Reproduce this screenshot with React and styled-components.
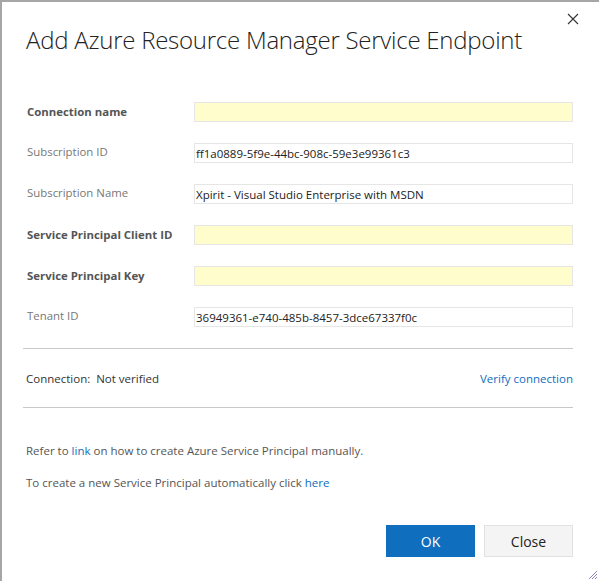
import styled, { createGlobalStyle } from "styled-components";

const GlobalStyle = createGlobalStyle`
  html, body {
    margin: 0;
    padding: 0;
    background: #ffffff;
  }
  body {
    font-family: "Open Sans", "Noto Sans", sans-serif;
  }
`;

const fields = [
  { label: "Connection name", required: true, value: "" },
  { label: "Subscription ID", value: "ff1a0889-5f9e-44bc-908c-59e3e99361c3" },
  { label: "Subscription Name", value: "Xpirit - Visual Studio Enterprise with MSDN" },
  { label: "Service Principal Client ID", required: true, value: "" },
  { label: "Service Principal Key", required: true, value: "" },
  { label: "Tenant ID", value: "36949361-e740-485b-8457-3dce67337f0c" },
];

const App = () => {
  return (
    <>
      <GlobalStyle />
      <Dialog>
        <CloseButton aria-label="Close">
          <svg width="12" height="12" viewBox="0 0 12 12">
            <path d="M1 1 L11 11 M11 1 L1 11" stroke="#333" strokeWidth="1.1" />
          </svg>
        </CloseButton>

        <Title>Add Azure Resource Manager Service Endpoint</Title>

        <Form>
          {fields.map(({ label, required, value }) => (
            <Row key={label}>
              <Label $required={required}>{label}</Label>
              <Input $required={required} defaultValue={value} readOnly />
            </Row>
          ))}
        </Form>

        <Divider />

        <StatusRow>
          <span>Connection:&nbsp; Not verified</span>
          <Link>Verify connection</Link>
        </StatusRow>

        <Divider />

        <Help>
          <p>
            Refer to <Link>link</Link> on how to create Azure Service Principal manually.
          </p>
          <p>
            To create a new Service Principal automatically click <Link>here</Link>
          </p>
        </Help>

        <Footer>
          <Button $primary>OK</Button>
          <Button>Close</Button>
        </Footer>

        <Grip width="10" height="10" viewBox="0 0 10 10">
          <path d="M9 1 L1 9 M9 4 L4 9 M9 7 L7 9" stroke="#8a8ac0" strokeWidth="1" />
        </Grip>
      </Dialog>
    </>
  );
};

export default App;

const Dialog = styled.div`
  position: relative;
  box-sizing: border-box;
  width: 599px;
  height: 581px;
  border-left: 2px solid #a6a6a6;
  border-top: 2px solid #a6a6a6;
  background: #ffffff;
  padding: 0 26px 0 21px;
  display: flex;
  flex-direction: column;
`;

const CloseButton = styled.button`
  position: absolute;
  top: 11px;
  right: 20px;
  border: none;
  background: transparent;
  padding: 0;
  width: 12px;
  height: 12px;
  display: flex;
`;

const Title = styled.h1`
  margin: 23px 0 0 3px;
  font-family: "Open Sans", sans-serif;
  font-weight: 300;
  font-size: 24px;
  line-height: 30px;
  color: #222;
  letter-spacing: -0.25px;
`;

const Form = styled.div`
  display: flex;
  flex-direction: column;
  gap: 21px;
  margin-top: 47px;
`;

const Row = styled.div`
  display: grid;
  grid-template-columns: 171px 1fr;
  align-items: center;
`;

const Label = styled.label`
  padding-left: 4px;
  font-size: 11.4px;
  font-weight: ${(p) => (p.$required ? 700 : 400)};
  color: ${(p) => (p.$required ? "#555" : "#777")};
  margin-top: ${(p) => (p.$required ? "-2px" : "-4px")};
`;

const Input = styled.input`
  box-sizing: border-box;
  height: 20px;
  width: 100%;
  border: 1px solid #e6e6e6;
  background: ${(p) => (p.$required ? "#fffdcc" : "#ffffff")};
  font-family: "Open Sans", sans-serif;
  font-size: 11.5px;
  color: #222;
  padding: 0 1px;
  outline: none;
`;

const Divider = styled.hr`
  width: 100%;
  margin: 0;
  flex-shrink: 0;
  border: none;
  border-top: 1px solid #c8c8c8;
  &:first-of-type {
    margin-top: 21px;
  }
`;

const StatusRow = styled.div`
  display: flex;
  justify-content: space-between;
  align-items: center;
  height: 58px;
  padding-left: 3px;
  font-size: 11.5px;
  color: #333;
`;

const Link = styled.a`
  color: #106ebe;
  cursor: pointer;
`;

const Help = styled.div`
  margin-top: 34px;
  padding-left: 3px;
  font-size: 11.5px;
  color: #555;

  p {
    margin: 0 0 15px;
    line-height: 17px;
  }
`;

const Footer = styled.div`
  display: flex;
  justify-content: flex-end;
  gap: 9px;
  margin-top: 19px;
`;

const Button = styled.button`
  box-sizing: border-box;
  width: 89px;
  height: 32px;
  font-family: "Open Sans", sans-serif;
  font-size: 14px;
  border: 1px solid ${(p) => (p.$primary ? "#106ebe" : "#e2e2e2")};
  background: ${(p) => (p.$primary ? "#106ebe" : "#f4f4f4")};
  color: ${(p) => (p.$primary ? "#ffffff" : "#222")};
  cursor: pointer;
`;

const Grip = styled.svg`
  position: absolute;
  right: 1px;
  bottom: 1px;
`;
